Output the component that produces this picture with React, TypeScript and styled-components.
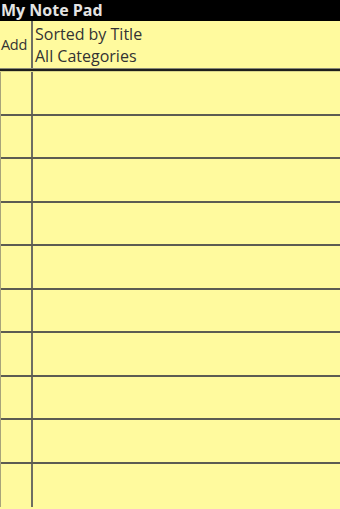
import React from "react";
import styled, { createGlobalStyle } from "styled-components";

const Global = createGlobalStyle`
  html, body { margin: 0; padding: 0; background: #fffa9e; }
  body { width: 340px; height: 509px; overflow: hidden; font-family: "Open Sans", "Noto Sans", sans-serif; }
`;

const Screen = styled.div`
  width: 340px;
  height: 509px;
  display: flex;
  flex-direction: column;
  background: #fffa9e;
`;

const TitleBar = styled.div`
  height: 21px;
  background: #000;
  color: #e4e4e4;
  font-weight: 700;
  font-size: 16px;
  line-height: 21px;
  padding-left: 1px;
`;

const Header = styled.div`
  display: flex;
  height: 47px;
  border-bottom: 1px solid #8a8a78;
`;

const AddCell = styled.div`
  width: 33px;
  box-sizing: border-box;
  border-right: 2px solid #6e6e62;
  display: flex;
  align-items: center;
  padding-left: 1px;
  font-size: 14.5px;
  letter-spacing: -0.3px;
  color: #333;
`;

const SortCell = styled.div`
  display: flex;
  flex-direction: column;
  justify-content: center;
  padding-left: 2px;
  font-size: 16px;
  line-height: 22px;
  color: #333;
`;

const HeaderRule = styled.div`
  height: 2px;
  background: #1e1e1a;
  border-bottom: 1px solid #d8d48a;
`;

const List = styled.div`
  display: flex;
  flex-direction: column;
  border-left: 1px solid #a8a47a;
`;

const Row = styled.div<{ $last?: boolean }>`
  display: flex;
  height: 43.5px;
  box-sizing: border-box;
  border-bottom: ${(p) => (p.$last ? "none" : "2px solid #5c5c52")};
`;

const LeftCell = styled.div`
  width: 32px;
  box-sizing: border-box;
  border-right: 2px solid #6e6e62;
`;

const MainCell = styled.div`
  flex: 1;
`;

export default function App() {
  const rows = Array.from({ length: 10 });
  return (
    <>
      <Global />
      <Screen>
        <TitleBar>My Note Pad</TitleBar>
        <Header>
          <AddCell>Add</AddCell>
          <SortCell>
            <div>Sorted by Title</div>
            <div>All Categories</div>
          </SortCell>
        </Header>
        <HeaderRule />
        <List>
          {rows.map((_, i) => (
            <Row key={i} $last={i === rows.length - 1}>
              <LeftCell />
              <MainCell />
            </Row>
          ))}
        </List>
      </Screen>
    </>
  );
}
